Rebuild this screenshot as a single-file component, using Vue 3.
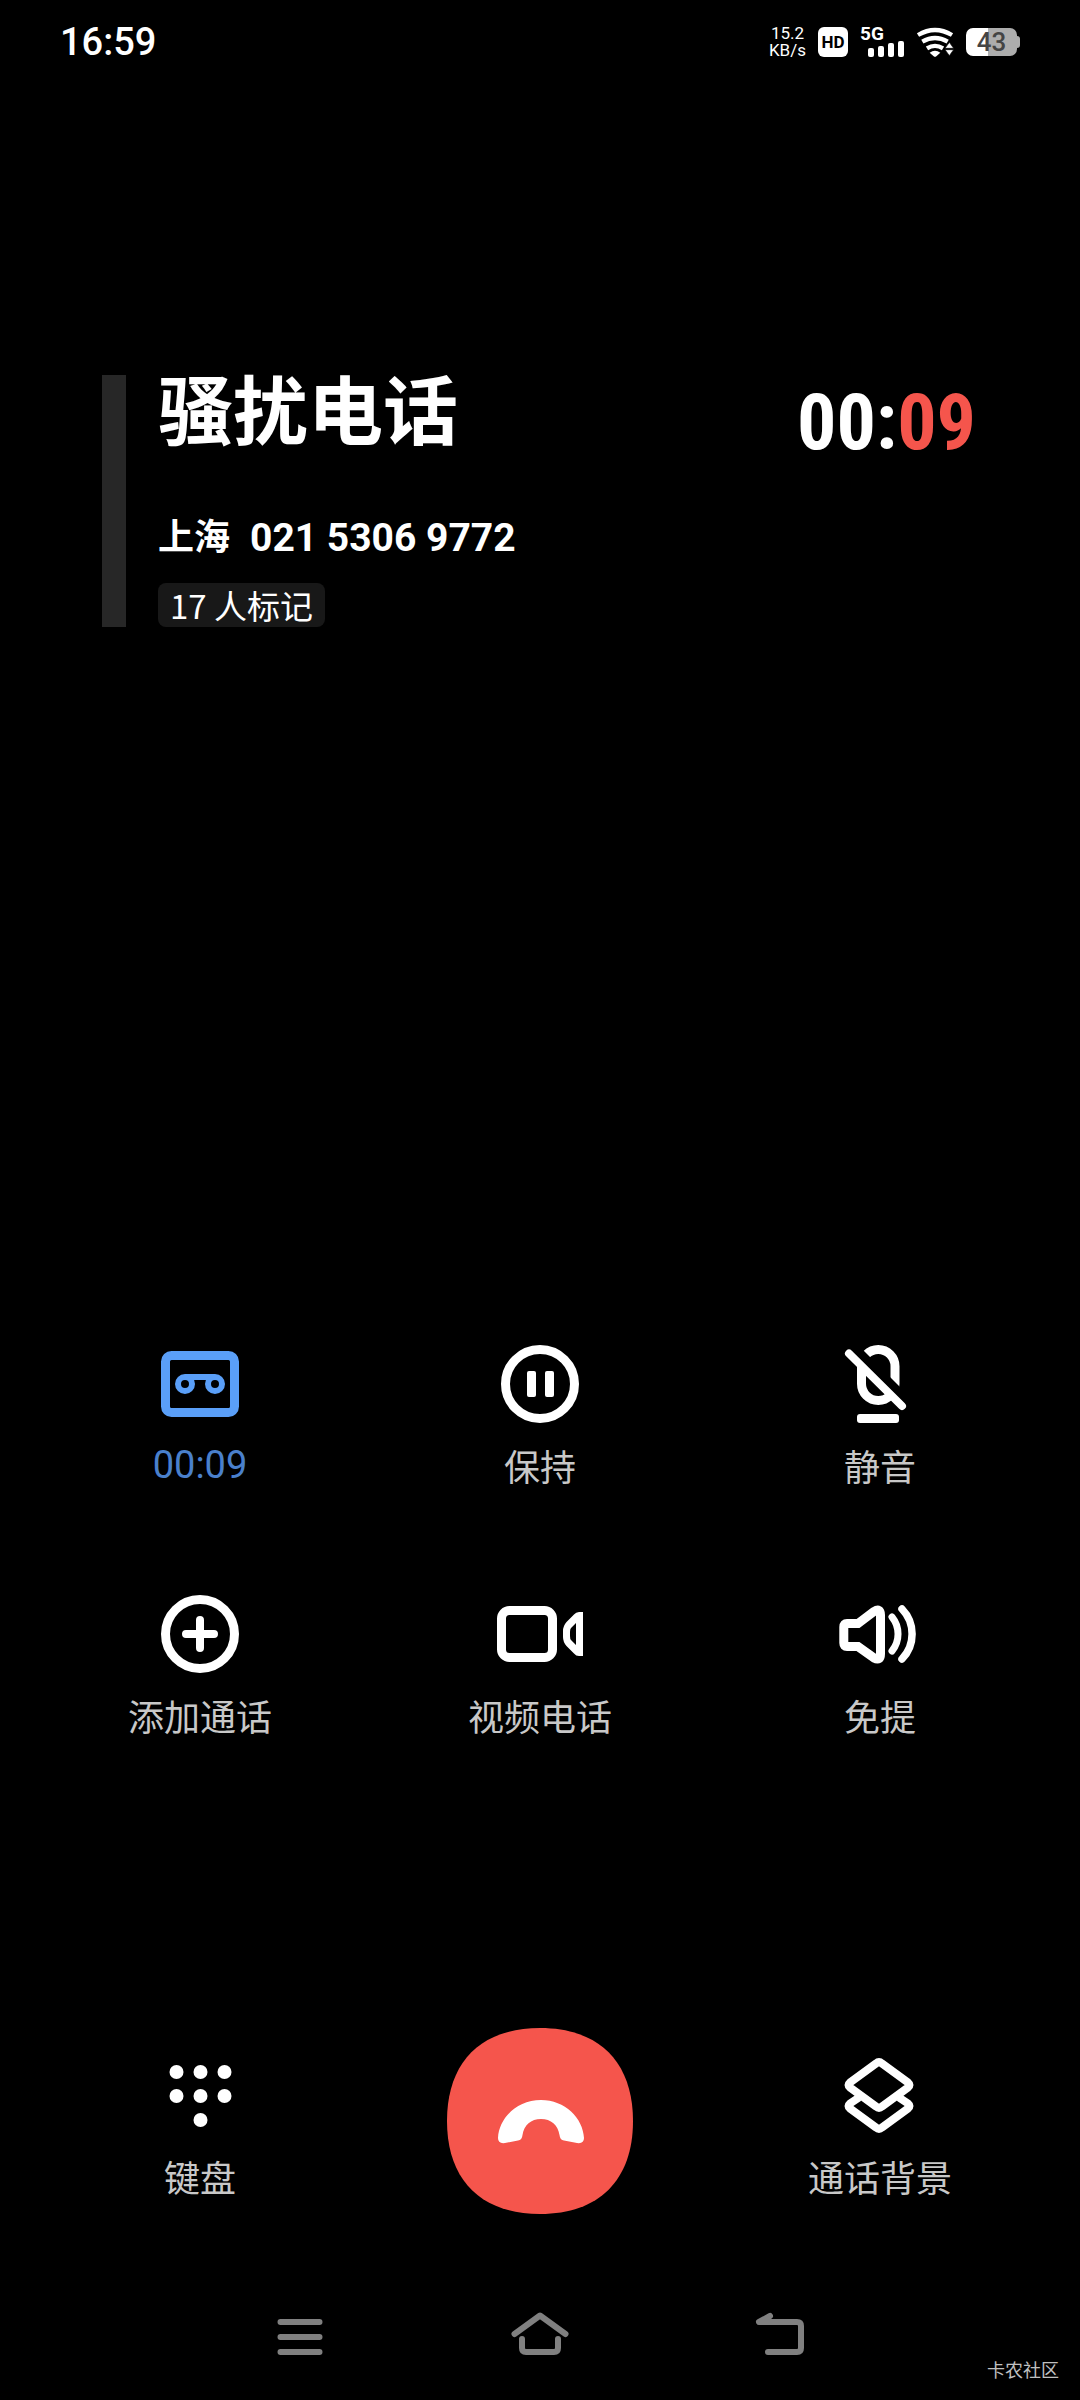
<template>
  <div class="call-page">
    <header class="status-bar">
      <time class="clock">16:59</time>
      <div class="status-icons">
        <div class="net-speed">
          <span>15.2</span>
          <span>KB/s</span>
        </div>
        <span class="hd">HD</span>
        <div class="signal">
          <span class="signal-type">5G</span>
          <svg class="signal-bars" viewBox="0 0 36 16" aria-hidden="true">
            <rect x="0" y="7" width="6" height="9" rx="2" />
            <rect x="10" y="5" width="6" height="11" rx="2" />
            <rect x="20" y="2" width="6" height="14" rx="2" />
            <rect x="30" y="0" width="6" height="16" rx="2" />
          </svg>
        </div>
        <svg class="wifi" viewBox="532 82 114 90" aria-hidden="true">
          <g fill="none" stroke="#fff" stroke-width="13">
            <path d="M538 106 Q589 76 640 106" />
            <path d="M551 126 Q589 104 627 126" />
            <path d="M565 146 Q589 131 613 146" />
          </g>
          <path d="M573 159 Q589 147 605 159 L593 170 Q589 173 585 170Z" fill="#fff" />
          <path d="M632 128 L645 146 H619Z M619 150 H645 L632 168Z" fill="#fff" stroke="#000" stroke-width="2" />
        </svg>
        <div class="battery">
          <span class="battery-body">43</span>
          <span class="battery-cap"></span>
        </div>
      </div>
    </header>

    <section class="caller">
      <div class="caller-bar"></div>
      <div class="caller-info">
        <h1 class="caller-name">骚扰电话</h1>
        <p class="caller-number">
          <span>上海</span>
          <span>021 5306 9772</span>
        </p>
        <span class="caller-tag">17 人标记</span>
      </div>
      <div class="timer">00:<span class="seconds">09</span></div>
    </section>

    <main class="actions">
      <button v-for="item in actions" :key="item.name" type="button" class="action" :class="{ active: item.active }">
        <svg class="action-icon" viewBox="0 0 90 90" aria-hidden="true" v-html="item.icon"></svg>
        <span class="action-label">{{ item.label }}</span>
      </button>
    </main>

    <footer class="bottom-row">
      <button type="button" class="action">
        <svg class="action-icon" viewBox="0 0 90 90" aria-hidden="true">
          <circle v-for="(dot, i) in dots" :key="i" :cx="dot[0]" :cy="dot[1]" r="7" fill="currentColor" />
        </svg>
        <span class="action-label">键盘</span>
      </button>
      <button type="button" class="hangup" aria-label="挂断">
        <svg viewBox="0 0 186 186" aria-hidden="true">
          <path d="M93 0C152 0 186 34 186 93S152 186 93 186S0 152 0 93S34 0 93 0Z" fill="#f5554c" />
          <path
            d="M94 72C118 72 136 90 137 110Q137 116 130 115L117 112.500Q113 112 112.500 107C111 97 104 91 94 91S77 97 75.500 107Q75 112 71 112.500L58 115Q51 116 51 110C52 90 70 72 94 72Z"
            fill="#fff"
          />
        </svg>
      </button>
      <button type="button" class="action">
        <svg class="action-icon" viewBox="0 0 90 90" aria-hidden="true">
          <g fill="none" stroke="currentColor" stroke-width="8" stroke-linejoin="round">
            <path d="M41 13.500Q44 11 47 13.500L73 32.500Q76 35 73 37.500L47 56.500Q44 59 41 56.500L15 37.500Q12 35 15 32.500Z" />
            <path d="M24 47.500L15 53.500Q12 56 15 58.500L41 77.500Q44 80 47 77.500L73 58.500Q76 56 73 53.500L64 47.500" />
          </g>
        </svg>
        <span class="action-label">通话背景</span>
      </button>
    </footer>

    <nav class="nav-bar">
      <button v-for="item in navs" :key="item.label" type="button" :aria-label="item.label">
        <svg viewBox="0 0 60 60" aria-hidden="true">
          <path :d="item.path" />
        </svg>
      </button>
    </nav>

    <span class="watermark">卡农社区</span>
  </div>
</template>

<script setup>
// 通话操作按钮
const actions = [
  {
    name: 'record',
    label: '00:09',
    active: true,
    icon: `<g fill="none" stroke="currentColor">
      <rect x="10.5" y="16.5" width="69" height="57" rx="6" stroke-width="9"/>
      <path d="M30 38H60" stroke-width="6"/>
      <circle cx="30" cy="45" r="7" stroke-width="6"/>
      <circle cx="60" cy="45" r="7" stroke-width="6"/>
    </g>`
  },
  {
    name: 'hold',
    label: '保持',
    icon: `<circle cx="45" cy="45" r="34.5" fill="none" stroke="currentColor" stroke-width="9"/>
      <rect x="32" y="32" width="9" height="26" rx="2" fill="currentColor"/>
      <rect x="50" y="32" width="9" height="26" rx="2" fill="currentColor"/>`
  },
  {
    name: 'mute',
    label: '静音',
    icon: `<clipPath id="mic-top"><path d="M17 0H90V73Z"/></clipPath>
      <clipPath id="mic-bottom"><path d="M0 0L90 90H0Z"/></clipPath>
      <g fill="none" stroke="currentColor" stroke-width="9">
        <rect x="26.5" y="10.5" width="33.5" height="51" rx="16.75" clip-path="url(#mic-top)"/>
        <rect x="26.5" y="10.5" width="33.5" height="51" rx="16.75" clip-path="url(#mic-bottom)"/>
      </g>
      <path d="M14 14.500L67 67" stroke="currentColor" stroke-width="8" stroke-linecap="round"/>
      <rect x="22" y="75" width="42" height="9" rx="3" fill="currentColor"/>`
  },
  {
    name: 'add',
    label: '添加通话',
    icon: `<g fill="none" stroke="currentColor">
      <circle cx="45" cy="45" r="34.5" stroke-width="9"/>
      <path d="M31 45H59M45 31V59" stroke-width="8" stroke-linecap="round"/>
    </g>`
  },
  {
    name: 'video',
    label: '视频电话',
    icon: `<rect x="6.5" y="21.5" width="51" height="47" rx="8" fill="none" stroke="currentColor" stroke-width="9"/>
      <path fill="currentColor" fill-rule="evenodd" d="M88 23H84Q81 23 79 25.500L71.500 33Q68 37 68 42V48Q68 53 71.500 57L79 64.500Q81 67 84 67H88ZM81 34V56L76 51Q75 50 75 47V43Q75 40 76 39Z"/>`
  },
  {
    name: 'speaker',
    label: '免提',
    icon: `<g fill="none" stroke="currentColor" stroke-linecap="round">
      <path stroke-width="9" d="M12 34.500H23L39 22.500Q45.500 18.500 45.500 26V65Q45.500 72.500 39 69L23 57.500H12Q8.800 57.500 8.800 54V38Q8.800 34.500 12 34.500Z"/>
      <path stroke-width="7" d="M57 28A27 27 0 0 1 57 62"/>
      <path stroke-width="7.5" d="M67 20A36 36 0 0 1 67 70"/>
    </g>`
  }
]

// 键盘图标的圆点
const dots = [
  [21.5, 22], [45.5, 22], [69.5, 22],
  [21.5, 46], [45.5, 46], [69.5, 46],
  [45.5, 70]
]

// 系统导航键
const navs = [
  { label: '最近任务', path: 'M10.500 15H49.500M10.500 30H49.500M10.500 45H49.500' },
  { label: '主页', path: 'M4.500 27L30 8.500L55.500 27M12 32V41Q12 45 16 45H44Q48 45 48 41V32' },
  { label: '返回', path: 'M20 9L9 15H47Q51 15 51 19V41Q51 45 47 45H18' }
]
</script>

<style>
body {
  background: #000;
}
</style>

<style scoped>
.call-page {
  position: relative;
  display: flex;
  flex-direction: column;
  min-height: 100vh;
  background: #000;
  color: #fff;
  font-family: Roboto, "Noto Sans CJK SC", sans-serif;
}

button {
  padding: 0;
  border: none;
  background: none;
  color: inherit;
  font-family: inherit;
  cursor: pointer;
}

svg {
  display: block;
}

.status-bar {
  display: flex;
  justify-content: space-between;
  align-items: center;
  height: 84px;
  padding: 0 60px;
}

.clock {
  font-size: 38px;
  line-height: 44px;
  font-weight: 500;
}

.status-icons {
  display: flex;
  align-items: center;
  gap: 12px;
}

.net-speed {
  display: flex;
  flex-direction: column;
  align-items: center;
  font-size: 17px;
  line-height: 17px;
}

.net-speed span {
  height: 17px;
}

.hd {
  width: 30px;
  border-radius: 6px;
  background: #fff;
  color: #000;
  font-size: 17px;
  line-height: 30px;
  font-weight: 700;
  text-align: center;
}

.signal {
  display: flex;
  flex-direction: column;
  width: 44px;
}

.signal-type {
  font-size: 19px;
  line-height: 14px;
  font-weight: 700;
}

.signal-bars {
  align-self: flex-end;
  width: 36px;
  height: 16px;
  fill: #fff;
}

.wifi {
  width: 38px;
  height: 30px;
}

.battery {
  display: flex;
  align-items: center;
}

.battery-body {
  width: 51px;
  border-radius: 7px;
  background: linear-gradient(90deg, #fff 43%, #adadad 43%);
  color: #444;
  font-size: 26px;
  line-height: 28px;
  font-weight: 500;
  text-align: center;
}

.battery-cap {
  width: 3px;
  height: 12px;
  border-radius: 0 3px 3px 0;
  background: #adadad;
}

.caller {
  display: flex;
  align-items: flex-start;
  margin-top: 291px;
  padding: 0 104px 0 102px;
}

.caller-bar {
  align-self: stretch;
  width: 24px;
  background: #272727;
}

.caller-info {
  display: flex;
  flex: 1;
  flex-direction: column;
  align-items: flex-start;
  padding-left: 32px;
}

.caller-name {
  margin: 0 0 64px;
  font-size: 75px;
  line-height: 76px;
  font-weight: 700;
}

.caller-number {
  display: flex;
  gap: 20px;
  margin: 0 0 22px;
  font-size: 39px;
  line-height: 46px;
  font-weight: 700;
}

.caller-number span:first-child {
  font-size: 36px;
}

.caller-tag {
  padding: 0 12px;
  border-radius: 8px;
  background: #181818;
  font-family: "Noto Sans CJK SC", sans-serif;
  font-size: 33px;
  line-height: 44px;
}

.timer {
  margin-top: 4px;
  font-family: "Roboto Condensed", "Liberation Sans Narrow", Roboto, sans-serif;
  font-size: 78px;
  line-height: 88px;
  font-weight: 700;
}

.seconds {
  color: #f5554c;
}

.actions,
.bottom-row {
  display: grid;
  grid-template-columns: repeat(3, 1fr);
  padding: 0 30px;
}

.actions {
  row-gap: 102px;
  margin-top: auto;
}

.action {
  display: flex;
  flex-direction: column;
  align-items: center;
  gap: 14px;
}

.action-icon {
  width: 90px;
  height: 90px;
}

.action-label {
  color: #c8c8c8;
  font-family: "Noto Sans CJK SC", sans-serif;
  font-size: 36px;
  line-height: 44px;
}

.action.active {
  color: #5a9ff8;
}

.action.active .action-label {
  color: #4a80cc;
  font-family: Roboto, sans-serif;
  font-size: 38px;
}

.bottom-row {
  align-items: center;
  margin-top: 291px;
}

.bottom-row .action {
  padding-top: 6px;
}

.hangup {
  justify-self: center;
}

.hangup svg {
  width: 186px;
  height: 186px;
}

.nav-bar {
  display: grid;
  grid-template-columns: repeat(3, 1fr);
  padding: 93px 180px 33px;
}

.nav-bar button {
  display: flex;
  justify-content: center;
}

.nav-bar svg {
  width: 60px;
  height: 60px;
  fill: none;
  stroke: #808080;
  stroke-width: 6;
  stroke-linecap: round;
  stroke-linejoin: round;
}

.watermark {
  position: absolute;
  right: 21px;
  bottom: 19px;
  color: #c0c0c0;
  font-family: "Noto Sans CJK SC", sans-serif;
  font-size: 18px;
  line-height: 24px;
}
</style>
